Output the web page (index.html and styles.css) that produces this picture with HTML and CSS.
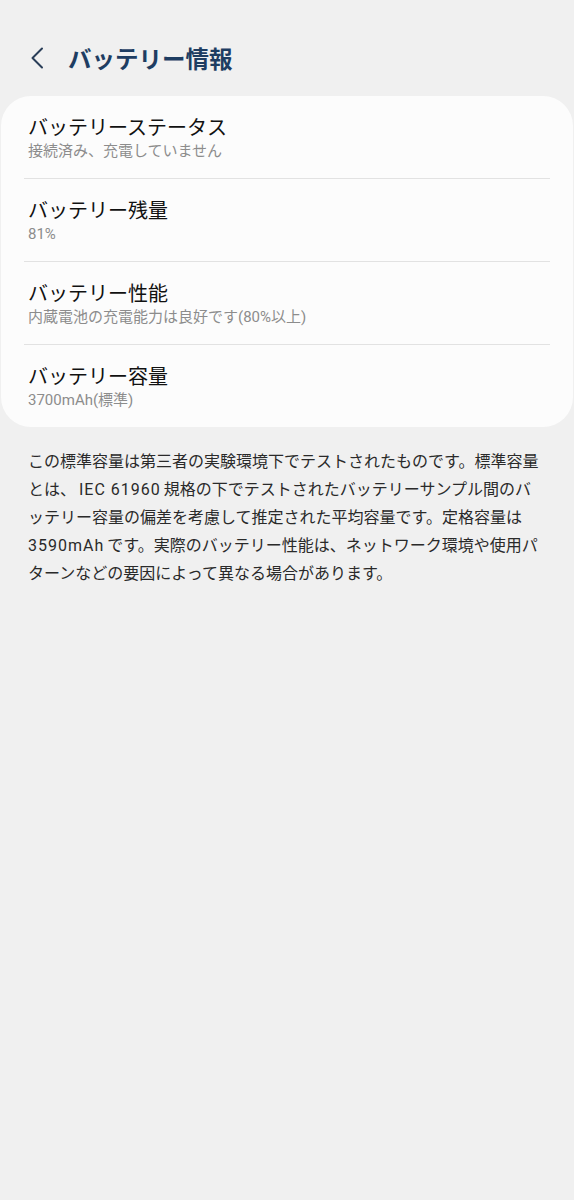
FILE: index.html
```html
<!DOCTYPE html>
<html lang="ja">
<head>
<meta charset="utf-8">
<link rel="stylesheet" href="styles.css">
</head>
<body>
<header class="header">
  <svg class="back" width="16" height="22" viewBox="0 0 16 22"><path d="M13 1.5 L3.5 11 L13 20.5" fill="none" stroke="#2a3e58" stroke-width="2" stroke-linecap="round" stroke-linejoin="round"/></svg>
  <h1 class="title">バッテリー情報</h1>
</header>
<section class="card">
  <div class="row">
    <div class="row-title">バッテリーステータス</div>
    <div class="row-sub">接続済み、充電していません</div>
  </div>
  <div class="row">
    <div class="row-title">バッテリー残量</div>
    <div class="row-sub">81%</div>
  </div>
  <div class="row">
    <div class="row-title">バッテリー性能</div>
    <div class="row-sub">内蔵電池の充電能力は良好です(80%以上)</div>
  </div>
  <div class="row last">
    <div class="row-title">バッテリー容量</div>
    <div class="row-sub">3700mAh(標準)</div>
  </div>
</section>
<p class="note">この標準容量は第三者の実験環境下でテストされたものです。標準容量とは、<span class="lat spaced">IEC 61960</span>規格の下でテストされたバッテリーサンプル間のバッテリー容量の偏差を考慮して推定された平均容量です。定格容量は<span class="lat tail">3590mAh</span>です。実際のバッテリー性能は、ネットワーク環境や使用パターンなどの要因によって異なる場合があります。</p>
</body>
</html>
```

FILE: styles.css
```css
html, body {
  margin: 0;
  padding: 0;
  background: #f0f0f0;
  font-family: "Noto Sans CJK JP", "Noto Sans", sans-serif;
}
.header {
  display: flex;
  align-items: center;
  height: 76px;
  padding-top: 20px;
  padding-left: 29px;
  box-sizing: content-box;
}
.back {
  display: block;
  margin-right: 23px;
}
.title {
  margin: 0;
  font-size: 23.5px;
  font-weight: 700;
  color: #1e3d62;
  line-height: 32px;
}
.card {
  margin: 0 1px;
  background: #fcfcfc;
  border-radius: 30px;
}
.row {
  margin: 0 23px;
  padding: 18px 4px;
  border-bottom: 1.5px solid #e2e2e2;
}
.row.last {
  border-bottom: none;
}
.row-title {
  font-size: 20px;
  line-height: 26px;
  color: #111;
}
.row-sub {
  font-family: "Roboto", "Noto Sans CJK JP", sans-serif;
  font-size: 15px;
  line-height: 20px;
  color: #8c8c8c;
  padding-top: 1px;
  margin-bottom: -1px;
}
.note {
  margin: 19px 0 0;
  padding: 0 30px 0 28px;
  font-size: 16px;
  line-height: 28px;
  color: #2a2a2a;
}
.lat {
  font-family: "Roboto", sans-serif;
  letter-spacing: 1px;
  line-height: 1;
}
.spaced {
  margin: 0 3px;
}
.tail {
  margin-right: 3px;
}
```
